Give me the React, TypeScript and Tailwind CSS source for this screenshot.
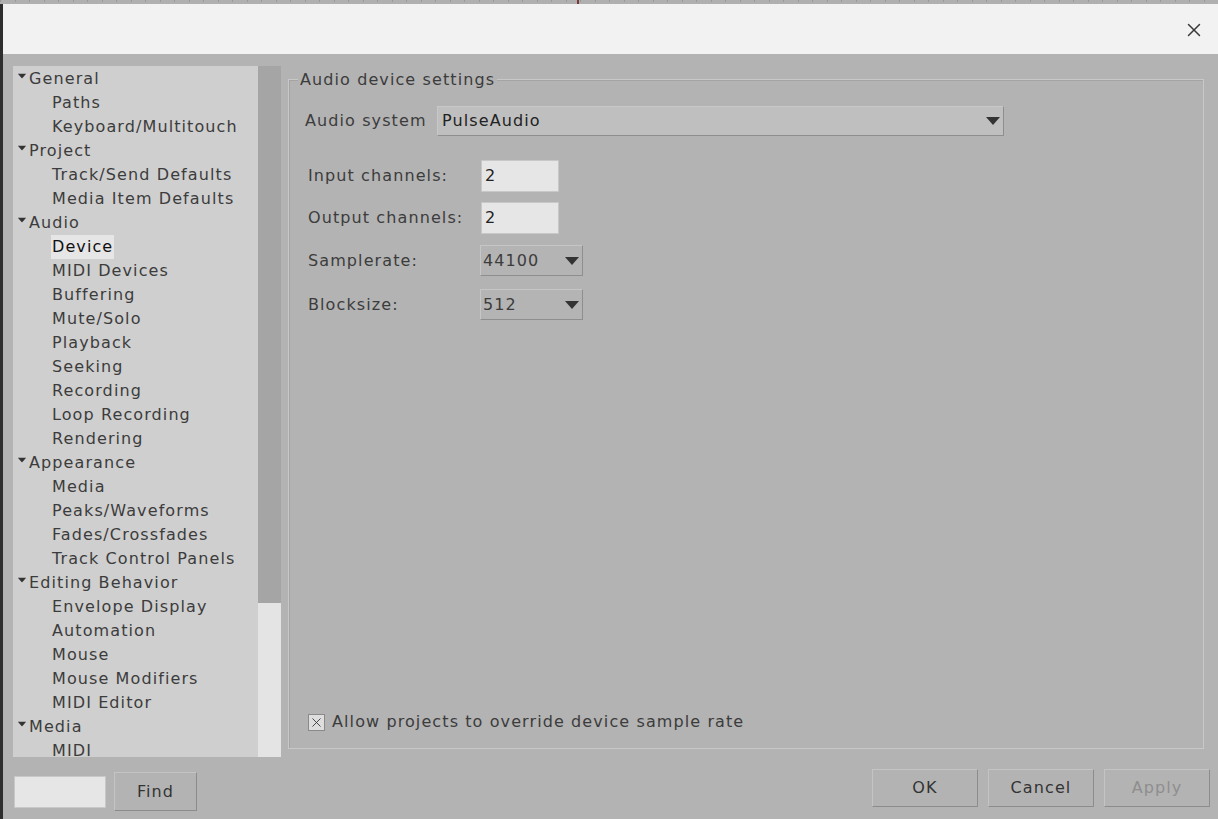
import { X } from 'lucide-react';

type Node = { label: string; children: string[] };

const tree: Node[] = [
  { label: 'General', children: ['Paths', 'Keyboard/Multitouch'] },
  { label: 'Project', children: ['Track/Send Defaults', 'Media Item Defaults'] },
  {
    label: 'Audio',
    children: ['Device', 'MIDI Devices', 'Buffering', 'Mute/Solo', 'Playback', 'Seeking', 'Recording', 'Loop Recording', 'Rendering'],
  },
  { label: 'Appearance', children: ['Media', 'Peaks/Waveforms', 'Fades/Crossfades', 'Track Control Panels'] },
  {
    label: 'Editing Behavior',
    children: ['Envelope Display', 'Automation', 'Mouse', 'Mouse Modifiers', 'MIDI Editor'],
  },
  { label: 'Media', children: ['MIDI'] },
];

function Caret({ className = '' }: { className?: string }) {
  return (
    <svg width="14" height="8" viewBox="0 0 14 8" className={className}>
      <path d="M0 0 L14 0 L7 8 Z" fill="#333" />
    </svg>
  );
}

function Button({ children, disabled }: { children: string; disabled?: boolean }) {
  return (
    <button
      className={
        'flex h-[38px] w-[106px] items-center justify-center border border-t-[#c4c4c4] border-l-[#c4c4c4] border-r-[#8c8c8c] border-b-[#8c8c8c] bg-[#b3b3b3] ' +
        (disabled ? 'text-[#8e8e8e]' : 'text-[#333]')
      }
    >
      {children}
    </button>
  );
}

function SmallSelect({ value }: { value: string }) {
  return (
    <div className="flex h-[31px] w-[103px] items-center justify-between border border-t-[#c6c6c6] border-l-[#c6c6c6] border-r-[#8e8e8e] border-b-[#8e8e8e] bg-[#b4b4b4] pl-[2px] pr-[3px]">
      <span>{value}</span>
      <Caret />
    </div>
  );
}

export default function App() {
  const ticks = Array.from({ length: 84 }, (_, i) => i);

  return (
    <div
      className="flex h-[819px] w-[1218px] flex-col overflow-hidden bg-[#b3b3b3] text-[16px] tracking-[1.1px] text-[#3c3c3c]"
      style={{ fontFamily: '"DejaVu Sans", sans-serif' }}
    >
      {/* ruler strip from the window behind */}
      <div className="relative flex h-[4px] shrink-0 bg-[#b0b0b0]">
        {ticks.map((i) => (
          <div key={i} className="h-[2px] w-[14.5px] shrink-0 border-l border-[#999]" />
        ))}
        <div className="absolute left-[577px] top-0 h-[4px] w-[2px] bg-[#7b3b3b]" />
      </div>

      <div className="flex min-h-0 flex-1 border-l-[3px] border-[#2e2e2e]">
        <div className="flex min-w-0 flex-1 flex-col">
          {/* title bar */}
          <div className="flex h-[50px] shrink-0 items-center justify-end bg-[#f2f2f2] pr-[13px]">
            <X className="mt-[2px] h-[22px] w-[22px] text-[#3a3a3a]" strokeWidth={1.6} />
          </div>

          <div className="flex min-h-0 flex-1 gap-[7px] pl-[10px] pr-[14px] pt-[12px]">
            {/* left column */}
            <div className="flex w-[268px] shrink-0 flex-col">
              <div className="flex h-[691px]">
                <div className="w-[245px] overflow-hidden bg-[#cfcfcf] pt-[1px]">
                  {tree.map((n) => (
                    <div key={n.label}>
                      <div className="flex h-[24px] items-center pl-[2px]">
                        <Caret className="mb-[6px] scale-[0.62]" />
                        <span>{n.label}</span>
                      </div>
                      {n.children.map((c) => (
                        <div key={c} className="flex h-[24px] items-center pl-[38px]">
                          <span
                            className={
                              c === 'Device' ? 'bg-[#e6e6e6] px-[1px] text-[#111]' : 'px-[1px]'
                            }
                          >
                            {c}
                          </span>
                        </div>
                      ))}
                    </div>
                  ))}
                </div>
                <div className="flex w-[23px] flex-col">
                  <div className="h-[537px] bg-[#a5a5a5]" />
                  <div className="flex-1 bg-[#e4e4e4]" />
                </div>
              </div>

              <div className="mt-[15px] flex items-start gap-[8px] pl-[1px]">
                <div className="mt-[4px] h-[32px] w-[92px] border border-[#c8c8c8] bg-[#e6e6e6]" />
                <button className="flex h-[39px] w-[83px] items-center justify-center border border-t-[#c4c4c4] border-l-[#c4c4c4] border-r-[#8c8c8c] border-b-[#8c8c8c] bg-[#b3b3b3] text-[#333]">
                  Find
                </button>
              </div>
            </div>

            {/* right column */}
            <div className="flex min-w-0 flex-1 flex-col">
              <div className="relative mt-[13px] flex h-[670px] flex-col border border-[#c8c8c8] px-[16px] pt-[25px] shadow-[inset_1px_1px_0_#a4a4a4]">
                <span className="absolute -top-[12px] left-[9px] bg-[#b3b3b3] px-[2px]">
                  Audio device settings
                </span>

                <div className="mt-[1px] flex items-center">
                  <span className="w-[132px] shrink-0 whitespace-nowrap">Audio system</span>
                  <div className="flex h-[30px] w-[567px] items-center justify-between border border-t-[#c8c8c8] border-l-[#c8c8c8] border-r-[#8e8e8e] border-b-[#8e8e8e] bg-[#bfbfbf] pl-[4px] pr-[3px] text-[#222]">
                    <span>PulseAudio</span>
                    <Caret />
                  </div>
                </div>

                <div className="mt-[24px] flex flex-col gap-[10px] pl-[3px]">
                  <div className="flex items-center">
                    <span className="w-[173px] whitespace-nowrap">Input channels:</span>
                    <div className="flex h-[32px] w-[78px] items-center border border-[#c8c8c8] bg-[#e6e6e6] pl-[3px] text-[#222]">
                      2
                    </div>
                  </div>
                  <div className="flex items-center">
                    <span className="w-[173px] whitespace-nowrap">Output channels:</span>
                    <div className="flex h-[32px] w-[78px] items-center border border-[#c8c8c8] bg-[#e6e6e6] pl-[3px] text-[#222]">
                      2
                    </div>
                  </div>
                  <div className="mt-[1px] flex items-center">
                    <span className="w-[172px]">Samplerate:</span>
                    <SmallSelect value="44100" />
                  </div>
                  <div className="mt-[3px] flex items-center">
                    <span className="w-[172px]">Blocksize:</span>
                    <SmallSelect value="512" />
                  </div>
                </div>

                <div className="mt-auto mb-[14px] flex items-center pl-[3px]">
                  <div className="mr-[7px] flex h-[17px] w-[17px] items-center justify-center border border-[#8a8a8a] bg-[#dedede]">
                    <X className="h-[15px] w-[15px] text-[#333]" strokeWidth={1.4} />
                  </div>
                  <span className="whitespace-nowrap">Allow projects to override device sample rate</span>
                </div>
              </div>

              <div className="-mr-[6px] mt-[20px] flex justify-end gap-[10px]">
                <Button>OK</Button>
                <Button>Cancel</Button>
                <Button disabled>Apply</Button>
              </div>
            </div>
          </div>
        </div>
      </div>
    </div>
  );
}
